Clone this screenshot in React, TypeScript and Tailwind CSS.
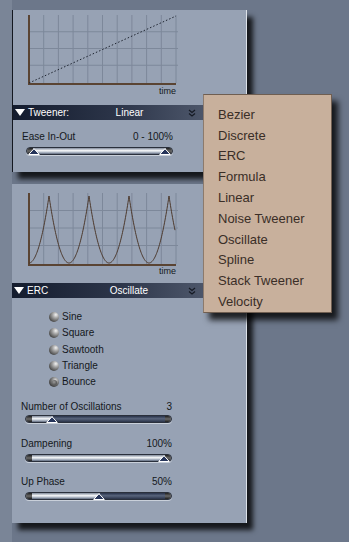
import React from 'react';

const MENU = ['Bezier', 'Discrete', 'ERC', 'Formula', 'Linear', 'Noise Tweener', 'Oscillate', 'Spline', 'Stack Tweener', 'Velocity'];
const WAVES = ['Sine', 'Square', 'Sawtooth', 'Triangle', 'Bounce'];

const W = 150;

const Grid: React.FC<{ h: number }> = ({ h }) => {
  const cols = Array.from({ length: 10 }, (_, i) => 1 + ((W - 3) / 10) * (i + 1));
  const rows = Array.from({ length: 3 }, (_, i) => ((h - 3) / 4) * (i + 1));
  return (
    <g>
      {cols.map((x, i) => (
        <line key={'c' + i} x1={x} y1={0} x2={x} y2={h - 2} stroke="#7d889a" strokeWidth={1} />
      ))}
      {rows.map((y, i) => (
        <line key={'r' + i} x1={1} y1={y} x2={W} y2={y} stroke="#7d889a" strokeWidth={1} />
      ))}
      <line x1={1} y1={0} x2={1} y2={h} stroke="#5a4433" strokeWidth={2} />
      <line x1={0} y1={h - 1} x2={W - 2} y2={h - 1} stroke="#5a4433" strokeWidth={2} />
    </g>
  );
};

const LinearChart = () => (
  <svg width={W} height={70} className="block">
    <Grid h={70} />
    <line x1={1} y1={68} x2={148} y2={1} stroke="#1e2430" strokeWidth={1} strokeDasharray="1.5 2" />
  </svg>
);

const BounceChart = () => {
  const h = 73;
  const pts: string[] = [];
  for (let x = 1; x <= 147; x += 0.5) {
    let p = ((x - 21) / 40) % 1;
    if (p < 0) p += 1;
    const v = (2 * p - 1) * (2 * p - 1);
    pts.push(`${x},${(h - 3 - v * 67).toFixed(2)}`);
  }
  return (
    <svg width={W} height={h} className="block">
      <Grid h={h} />
      <polyline points={pts.join(' ')} fill="none" stroke="#4d3a2e" strokeWidth={1} />
    </svg>
  );
};

const Chevron = () => (
  <svg width={8} height={8} viewBox="0 0 8 8" className="block">
    <polyline points="1,1 4,3.5 7,1" fill="none" stroke="#151a24" strokeWidth={1.2} />
    <polyline points="1,4.5 4,7 7,4.5" fill="none" stroke="#151a24" strokeWidth={1.2} />
  </svg>
);

const Bar: React.FC<{ label: string; value: string }> = ({ label, value }) => (
  <div className="grid grid-cols-[1fr_auto_1fr] items-center h-[15px] bg-[linear-gradient(to_right,#141c2e,#2c3549_45%,#5d677b)] text-white text-[10px] leading-none">
    <div className="flex items-center pl-[2px]">
      <svg width={10} height={7} viewBox="0 0 10 7" className="block">
        <polygon points="0,0 10,0 5,7" fill="#ffffff" />
      </svg>
      <span className="ml-[3px]">{label}</span>
    </div>
    <span>{value}</span>
    <div className="flex justify-end pr-[50px]">
      <Chevron />
    </div>
  </div>
);

const Thumb: React.FC<{ left: number }> = ({ left }) => (
  <svg width={12} height={7} viewBox="0 0 12 7" className="absolute bottom-0" style={{ left: left - 6 }}>
    <polygon points="6,0.7 11.3,6.5 0.7,6.5" fill="#25345a" stroke="#ffffff" strokeWidth={1} />
  </svg>
);

const Slider: React.FC<{ value: number; thumbs?: number[]; full?: boolean }> = ({ value, thumbs, full }) => {
  const pos = (v: number) => 8 + v * 131;
  const fillW = full ? 135 : pos(value) - 6;
  return (
    <div className="relative ml-[13px] w-[147px] h-[8px]">
      <div className="flex h-full rounded-full overflow-hidden border border-[#2a303c] shadow-[0_1px_0_#c9d0da]">
        <div className="w-[6px] bg-[linear-gradient(#1e1e1e,#6a6a6a_50%,#1e1e1e)]" />
        <div className="bg-[linear-gradient(#7f899a,#f7f9fb_45%,#b6bfcc_70%,#5d687c)]" style={{ width: fillW }} />
        <div className="flex-1 bg-[linear-gradient(#283249,#58647c_45%,#2a3348)]" />
        <div className="w-[6px] bg-[linear-gradient(#1e1e1e,#6a6a6a_50%,#1e1e1e)]" />
      </div>
      {(thumbs ?? [value]).map((t, i) => (
        <Thumb key={i} left={pos(t)} />
      ))}
    </div>
  );
};

const Row: React.FC<{ label: string; value: string; className?: string }> = ({ label, value, className }) => (
  <div className={`flex justify-between items-center ml-[9px] w-[151px] h-[12px] text-[10px] leading-none text-[#141820] ${className ?? ''}`}>
    <span>{label}</span>
    <span>{value}</span>
  </div>
);

const Radio: React.FC<{ selected?: boolean }> = ({ selected }) =>
  selected ? (
    <div className="w-[10px] h-[10px] rounded-full bg-[radial-gradient(circle_at_65%_30%,#d8d8d8_0%,#7a7a7a_40%,#2e2e2e_85%)] flex items-center justify-center">
      <div className="w-[5px] h-[5px] rounded-full bg-[radial-gradient(circle_at_40%_40%,#9a9a9a,#3a3a3a)]" />
    </div>
  ) : (
    <div className="w-[10px] h-[10px] rounded-full bg-[radial-gradient(circle_at_68%_28%,#f2f2f2_0%,#a8a8a8_30%,#4a4a4a_75%,#2a2a2a_100%)]" />
  );

export default function App() {
  return (
    <div className="relative w-[349px] h-[542px] overflow-hidden bg-[#6c778a] font-['Liberation_Sans',Arial,sans-serif]">
      <div className="flex h-full">
        <div className="w-[12px] h-full bg-[#7a8597]" />
        <div className="flex flex-col pt-[10px] w-[235px]">
          {/* Tweener panel */}
          <div className="h-[162px] bg-[#97a2b4] border-l border-l-[#141820] border-r border-r-[#dde2e9] shadow-[6px_7px_5px_rgba(0,0,0,0.8)]">
            <div className="pl-[15px] pt-[5px]">
              <LinearChart />
              <div className="w-[148px] text-right text-[9px] leading-none text-[#141820] mt-[2px]">time</div>
            </div>
            <div className="mt-[9px]">
              <Bar label="Tweener:" value="Linear" />
            </div>
            <Row label="Ease In-Out" value="0 - 100%" className="mt-[11px] ml-[8px]" />
            <div className="mt-[4px]">
              <Slider value={1} thumbs={[0, 1]} full />
            </div>
          </div>

          {/* ERC panel */}
          <div className="mt-[12px] h-[339px] bg-[#97a2b4] border-r border-r-[#dde2e9] shadow-[6px_7px_5px_rgba(0,0,0,0.8)]">
            <div className="pl-[16px] pt-[9px]">
              <BounceChart />
              <div className="w-[148px] text-right text-[9px] leading-none text-[#141820] mt-[1px]">time</div>
            </div>
            <div className="mt-[7px]">
              <Bar label="ERC" value="Oscillate" />
            </div>
            <div className="mt-[11px] ml-[37px] flex flex-col">
              {WAVES.map((w) => (
                <div key={w} className="flex items-center h-[16.3px] gap-[3px]">
                  <Radio selected={w === 'Bounce'} />
                  <span className="text-[10px] leading-none text-[#141820]">{w}</span>
                </div>
              ))}
            </div>
            <Row label="Number of Oscillations" value="3" className="mt-[11px]" />
            <div className="mt-[2px]">
              <Slider value={0.145} />
            </div>
            <Row label="Dampening" value="100%" className="mt-[15px]" />
            <div className="mt-[4px]">
              <Slider value={1} />
            </div>
            <Row label="Up Phase" value="50%" className="mt-[14px]" />
            <div className="mt-[4px]">
              <Slider value={0.5} />
            </div>
          </div>
        </div>
      </div>

      {/* tweener dropdown */}
      <div className="absolute left-[203px] top-[94px] w-[129px] h-[219px] bg-[#c8b09c] border border-[#6f5e51] border-l-[#8c7a6c] shadow-[6px_7px_6px_rgba(0,0,0,0.8)] pt-[9px] pl-[14px]">
        {MENU.map((m) => (
          <div key={m} className="h-[20.8px] flex items-center text-[13px] leading-none text-[#3a2e27]">
            {m}
          </div>
        ))}
      </div>
    </div>
  );
}
